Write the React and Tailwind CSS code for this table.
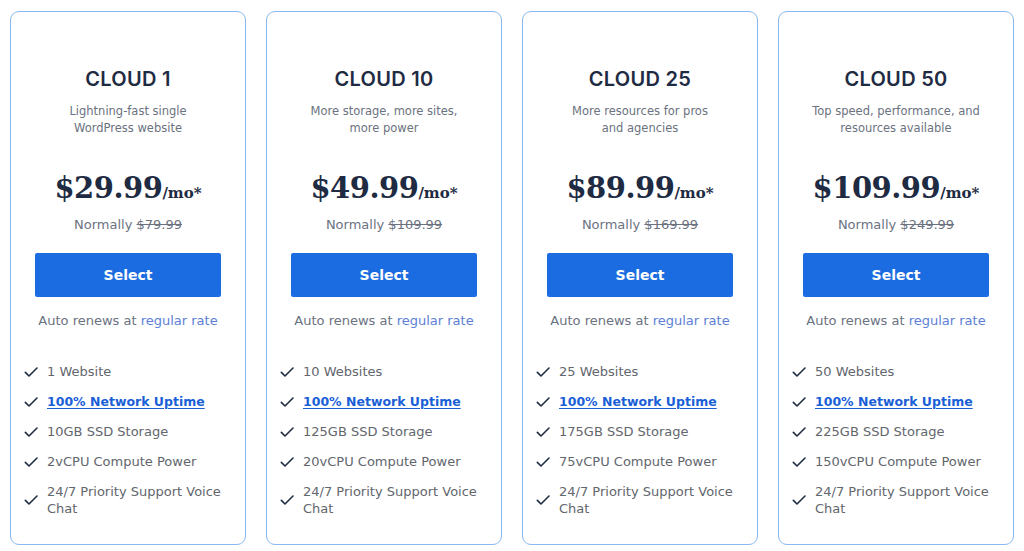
import React from 'react';

const plans = [
  {
    name: 'CLOUD 1',
    desc: ['Lightning-fast single', 'WordPress website'],
    price: '$29.99',
    normal: '$79.99',
    features: ['1 Website', '10GB SSD Storage', '2vCPU Compute Power'],
  },
  {
    name: 'CLOUD 10',
    desc: ['More storage, more sites,', 'more power'],
    price: '$49.99',
    normal: '$109.99',
    features: ['10 Websites', '125GB SSD Storage', '20vCPU Compute Power'],
  },
  {
    name: 'CLOUD 25',
    desc: ['More resources for pros', 'and agencies'],
    price: '$89.99',
    normal: '$169.99',
    features: ['25 Websites', '175GB SSD Storage', '75vCPU Compute Power'],
  },
  {
    name: 'CLOUD 50',
    desc: ['Top speed, performance, and', 'resources available'],
    price: '$109.99',
    normal: '$249.99',
    features: ['50 Websites', '225GB SSD Storage', '150vCPU Compute Power'],
  },
];

function Check() {
  return (
    <svg className="w-[16px] h-[16px] shrink-0 text-[#1e2b43]" viewBox="0 0 24 24" fill="none" stroke="currentColor" strokeWidth={2.4} strokeLinecap="round" strokeLinejoin="round">
      <path d="M3.5 12.5l5.5 5.5L21 6" />
    </svg>
  );
}

function Feature({ children }) {
  return (
    <li className="flex items-center gap-[8px] min-h-[17px]">
      <Check />
      <span>{children}</span>
    </li>
  );
}

function PlanCard({ plan }) {
  const [websites, storage, cpu] = plan.features;
  return (
    <div className="w-[236px] h-[534px] border border-[#8ab8f0] rounded-[9px] bg-white flex flex-col items-center pt-[55px]">
      <h2
        className="text-[20px] leading-[24px] font-semibold text-[#1e2b43] tracking-[0.3px]"
        style={{ fontFamily: 'Inter, "DejaVu Sans", sans-serif' }}
      >
        {plan.name}
      </h2>
      <p className="mt-[12px] text-[11.5px] leading-[17px] text-[#6b7280] text-center">
        {plan.desc[0]}
        <br />
        {plan.desc[1]}
      </p>
      <div className="mt-[31px] flex items-baseline text-[#1e2b43] font-bold" style={{ fontFamily: '"DejaVu Serif", Georgia, serif' }}>
        <span className="text-[29px] leading-[40px] tracking-[-0.5px]">{plan.price}</span>
        <span className="text-[15px]">/mo*</span>
      </div>
      <p className="mt-[7px] text-[13px] leading-[20px] text-[#6b7280]">
        Normally <span className="line-through">{plan.normal}</span>
      </p>
      <button className="mt-[18px] w-[186px] h-[44px] bg-[#1a6ce0] rounded-[2px] text-white text-[14px] font-bold">
        Select
      </button>
      <p className="mt-[15px] text-[13px] leading-[18px] text-[#6b7280]">
        Auto renews at <span className="text-[#5b7fd6]">regular rate</span>
      </p>
      <ul className="mt-[33px] self-stretch pl-[12px] pr-[12px] flex flex-col gap-[13px] text-[13px] leading-[17px] text-[#62666d]">
        <Feature>{websites}</Feature>
        <Feature>
          <a href="#" className="text-[12.5px] font-bold text-[#1a5fd6] underline underline-offset-2">100% Network Uptime</a>
        </Feature>
        <Feature>{storage}</Feature>
        <Feature>{cpu}</Feature>
        <Feature>24/7 Priority Support Voice Chat</Feature>
      </ul>
    </div>
  );
}

export default function App() {
  return (
    <div className="w-[1024px] h-[551px] bg-white flex gap-[20px] pl-[10px] pt-[11px]" style={{ fontFamily: '"DejaVu Sans", "Noto Sans", sans-serif' }}>
      {plans.map((p) => (
        <PlanCard key={p.name} plan={p} />
      ))}
    </div>
  );
}
